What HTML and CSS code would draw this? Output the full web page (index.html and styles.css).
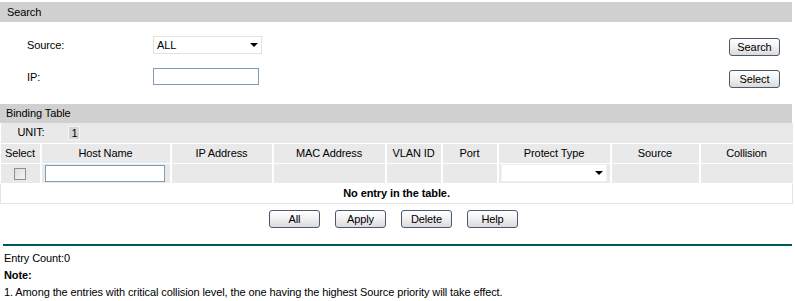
FILE: index.html
```html
<!DOCTYPE html>
<html lang="en">

<head>
  <meta charset="UTF-8">
  <title>IP-MAC Binding</title>
  <link rel="stylesheet" href="styles.css">
</head>

<body>
  <div class="page">
    <div class="bar">Search</div>
    <div class="search-body">
      <div class="search-row">
        <label class="field-label">Source:</label>
        <span class="select-wrap source-select">
          <select>
            <option>ALL</option>
          </select>
        </span>
        <button class="btn btn-side">Search</button>
      </div>
      <div class="search-row">
        <label class="field-label">IP:</label>
        <input class="text-input ip-input" type="text">
        <button class="btn btn-side">Select</button>
      </div>
    </div>

    <div class="bar bar-table">Binding Table</div>
    <table class="binding">
      <colgroup>
        <col style="width:40px">
        <col style="width:130px">
        <col style="width:102px">
        <col style="width:113px">
        <col style="width:56px">
        <col style="width:56px">
        <col style="width:113px">
        <col style="width:89px">
        <col style="width:93px">
      </colgroup>
      <tr class="unit-row">
        <td colspan="9">
          <span class="unit-label">UNIT:</span>
          <span class="unit-box">1</span>
        </td>
      </tr>
      <tr class="head-row">
        <th>Select</th>
        <th>Host Name</th>
        <th>IP Address</th>
        <th>MAC Address</th>
        <th>VLAN ID</th>
        <th>Port</th>
        <th>Protect Type</th>
        <th>Source</th>
        <th>Collision</th>
      </tr>
      <tr class="edit-row">
        <td><span class="check"></span></td>
        <td><input class="text-input host-input" type="text"></td>
        <td></td>
        <td></td>
        <td></td>
        <td></td>
        <td>
          <span class="select-wrap protect-select">
            <select>
              <option></option>
            </select>
          </span>
        </td>
        <td></td>
        <td></td>
      </tr>
      <tr class="empty-row">
        <td colspan="9">No entry in the table.</td>
      </tr>
    </table>

    <div class="actions">
      <button class="btn">All</button>
      <button class="btn">Apply</button>
      <button class="btn">Delete</button>
      <button class="btn">Help</button>
    </div>

    <hr class="divider">

    <div class="notes">
      <p>Entry Count:0</p>
      <p class="note-title">Note:</p>
      <p>1. Among the entries with critical collision level, the one having the highest Source priority will take effect.</p>
    </div>
  </div>
</body>

</html>
```

FILE: styles.css
```css
* {
  font-family: "Liberation Sans", Arial, sans-serif;
  box-sizing: border-box;
  letter-spacing: -0.1px;
}

body {
  margin: 0;
  padding: 0;
  font-size: 11px;
  color: #000000;
  background-color: #ffffff;
}

.page {
  width: 792px;
  padding-top: 2px;
}

.bar {
  height: 20px;
  line-height: 20px;
  padding-left: 7px;
  background-color: #d0d0d0;
}

.bar-table {
  height: 19px;
  line-height: 19px;
  padding-left: 6px;
}

.search-body {
  height: 82px;
  padding-top: 14px;
  display: flex;
  flex-direction: column;
  gap: 14px;
}

.search-row {
  display: flex;
  align-items: flex-start;
  height: 18px;
}

.field-label {
  width: 153px;
  padding-left: 27px;
  line-height: 18px;
}

.select-wrap {
  position: relative;
  display: inline-block;
}

.select-wrap select {
  -webkit-appearance: none;
  appearance: none;
  width: 100%;
  height: 100%;
  border: 1px solid #e2e2e2;
  border-radius: 0;
  background-color: #ffffff;
  font-size: 11px;
  padding: 0 0 0 3px;
  color: #000000;
  outline: none;
}

.select-wrap::after {
  content: "";
  position: absolute;
  right: 4px;
  top: 7px;
  border-left: 4px solid transparent;
  border-right: 4px solid transparent;
  border-top: 4px solid #000000;
}

.source-select {
  width: 109px;
  height: 18px;
}

.text-input {
  border: 1px solid #7f9db9;
  background-color: #ffffff;
  padding: 0 3px;
  font-size: 11px;
  outline: none;
}

.ip-input {
  width: 106px;
  height: 17px;
}

.btn {
  width: 51px;
  height: 18px;
  padding: 0;
  font-size: 11px;
  color: #000000;
  border: 1px solid #4a5a6e;
  border-radius: 3px;
  background: linear-gradient(to bottom, #ffffff 0%, #f2f2f2 45%, #dadada 100%);
  cursor: pointer;
}

.btn-side {
  margin-left: auto;
  margin-top: 2px;
  margin-right: 12px;
}

.binding {
  width: 792px;
  table-layout: fixed;
  border-collapse: collapse;
}

.binding td,
.binding th {
  padding: 0;
  height: 20px;
  font-weight: normal;
  text-align: center;
  white-space: nowrap;
}

.unit-row td {
  background-color: #e9e9e9;
  text-align: left;
  border-bottom: 1px solid #ffffff;
}

.unit-label {
  display: inline-block;
  width: 65px;
  padding-left: 17px;
}

.unit-box {
  display: inline-block;
  width: 12px;
  height: 14px;
  line-height: 13px;
  text-align: center;
  background-color: #d6d6d6;
  border: 1px solid #f4f4f4;
  vertical-align: middle;
}

.head-row th,
.edit-row td {
  background-color: #e9e9e9;
  border-left: 2px solid #ffffff;
  border-bottom: 1px solid #ffffff;
}

.head-row th:first-child,
.edit-row td:first-child {
  border-left: none;
}

.check {
  display: inline-block;
  width: 12px;
  height: 12px;
  margin-top: 3px;
  border: 1px solid #8e8f8f;
  background: linear-gradient(135deg, #dcdcdc 0%, #f6f6f6 100%);
}

.host-input {
  display: block;
  width: 120px;
  height: 17px;
  margin-left: 3px;
}

.protect-select {
  width: 106px;
  height: 18px;
  display: block;
  margin-left: 2px;
}

.protect-select select {
  border-color: #f0f0f0;
}

.empty-row td {
  font-weight: bold;
  background-color: #ffffff;
  border: 1px solid #e4e4e4;
  border-top: 1px solid #dedede;
}

.actions {
  display: flex;
  gap: 15px;
  padding-left: 269px;
  margin-top: 6px;
}

.actions .btn {
  width: 51px;
}

.divider {
  border: none;
  border-top: 2px solid #005a5a;
  margin: 16px 0 0 3px;
}

.notes {
  padding-left: 4px;
}

.notes p {
  margin: 0;
  line-height: 17px;
}

.notes p:first-child {
  margin-top: 4px;
}

.note-title {
  font-weight: bold;
}
```
